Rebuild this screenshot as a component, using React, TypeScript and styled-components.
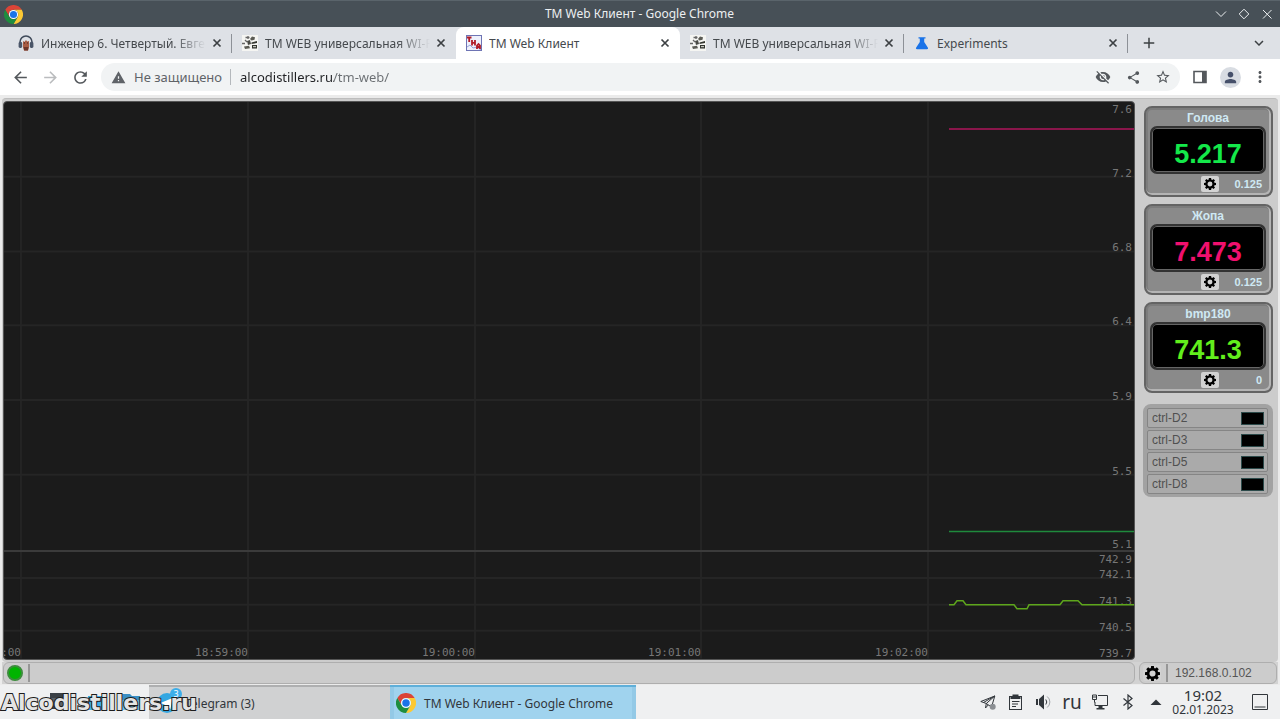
import React from 'react';
import styled, { createGlobalStyle } from 'styled-components';
import {
  MdAdd,
  MdArrowBack,
  MdArrowForward,
  MdExpandMore,
  MdMoreVert,
  MdPerson,
  MdRefresh,
  MdShare,
  MdStarBorder,
  MdVisibilityOff,
  MdWarning,
} from 'react-icons/md';

const GlobalStyle = createGlobalStyle`
  *, *::before, *::after { box-sizing: border-box; }
  html, body { margin: 0; padding: 0; }
  body {
    background: #eff0f1;
    font-family: "Noto Sans", "Open Sans", sans-serif;
    font-size: 13px;
    color: #31363b;
  }
  button, input { font: inherit; color: inherit; border: 0; padding: 0; margin: 0; background: none; }
  svg { display: block; flex: none; }
`;

const Desktop = styled.div`
  display: flex;
  flex-direction: column;
  min-height: 100vh;
`;

/* ---------- window title bar ---------- */

const TitleBar = styled.header`
  display: grid;
  grid-template-columns: 1fr auto 1fr;
  align-items: center;
  height: 27px;
  padding: 0 5px 0 4px;
  background: #475057;
  border-top: 1px solid #5a646b;
  color: #eceff1;
`;

const WindowTitle = styled.h1`
  margin: 0;
  font-size: 12px;
  font-weight: 400;
  line-height: 18px;
`;

const WindowButtons = styled.div`
  display: flex;
  justify-content: flex-end;
  gap: 6px;
`;

const WindowButton = styled.button`
  display: grid;
  place-items: center;
  width: 17px;
  height: 20px;
`;

/* ---------- tab strip ---------- */

const TabStrip = styled.nav`
  display: flex;
  align-items: center;
  height: 32px;
  padding: 0 7px 0 8px;
  background: #dee1e6;
`;

const Tab = styled.div<{ $active?: boolean; $line?: boolean }>`
  display: flex;
  align-items: center;
  flex: 0 1 224px;
  min-width: 0;
  height: 32px;
  padding: 0 7px 0 10px;
  border-radius: ${(p) => (p.$active ? '8px 8px 0 0' : '0')};
  background: ${(p) =>
    p.$active
      ? '#fff'
      : p.$line
        ? 'linear-gradient(#8d9197, #8d9197) right center / 1px 19px no-repeat'
        : 'transparent'};
`;

const TabButton = styled.button<{ $fade?: boolean }>`
  display: flex;
  align-items: center;
  gap: 7px;
  flex: 1;
  min-width: 0;
  text-align: left;
  color: #45494d;
  font-size: 12px;

  span {
    flex: 1;
    overflow: hidden;
    white-space: nowrap;
    mask-image: ${(p) => (p.$fade ? 'linear-gradient(to right, #000 80%, transparent)' : 'none')};
  }
`;

const CloseButton = styled.button`
  display: grid;
  place-items: center;
  width: 16px;
  height: 16px;
  margin-left: 3px;
  color: #3c4043;
`;

const StripButton = styled.button`
  display: grid;
  place-items: center;
  width: 28px;
  height: 28px;
  margin-left: 7px;
  color: #3c4043;
`;

const Spacer = styled.div`
  flex: 1;
`;

/* ---------- browser toolbar ---------- */

const Toolbar = styled.div`
  display: flex;
  align-items: center;
  height: 36px;
  padding: 0 5px;
  background: #fff;
`;

const ToolButton = styled.button<{ $dim?: boolean }>`
  display: grid;
  place-items: center;
  width: 30px;
  height: 28px;
  color: ${(p) => (p.$dim ? '#babcbe' : '#54585c')};
`;

const Omnibox = styled.div`
  display: flex;
  align-items: center;
  flex: 1;
  height: 28px;
  margin: 0 5px 0 6px;
  padding: 0 2px 0 10px;
  border-radius: 14px;
  background: #f1f3f4;
  color: #5f6368;
`;

const Security = styled.button`
  display: flex;
  align-items: center;
  gap: 8px;
  height: 16px;
  padding-right: 8px;
  border-right: 1px solid #b4b8bc;
  color: #5f6368;
  line-height: 16px;
`;

const Address = styled.input`
  flex: 1;
  min-width: 0;
  height: 20px;
  margin-left: 9px;
  outline: 0;
  color: transparent;
  background: linear-gradient(to right, #202124 94px, #6a6e72 94px);
  background-clip: text;
`;

const Avatar = styled.span`
  display: grid;
  place-items: center;
  width: 21px;
  height: 21px;
  border-radius: 50%;
  background: #d8dce2;
  color: #46506a;
`;

/* ---------- page ---------- */

const Page = styled.main`
  display: flex;
  flex-direction: column;
  flex: 1;
  padding: 3px 2px 1px;
  background: #ebebeb;
  font-family: "Liberation Sans", Arial, sans-serif;
`;

const Board = styled.div`
  display: flex;
  flex: 1;
  padding: 2px 5px 2px 1px;
  border-top: 1px solid #bdbdbd;
  border-radius: 4px;
  background: #ccc;
`;

const Charts = styled.section`
  display: flex;
  flex-direction: column;
  flex: 1;
  min-width: 0;
  border: 1px solid #555;
  border-radius: 4px;
  overflow: hidden;
  background: #1b1b1b;
`;

const ChartBox = styled.div<{ $share: number; $ruled?: boolean }>`
  flex: ${(p) => p.$share} 1 0;
  min-height: 0;
  border-top: ${(p) => (p.$ruled ? '2px solid #3b3b3b' : '0')};
`;

const ChartSvg = styled.svg`
  width: 100%;
  height: 100%;

  text {
    font-family: "DejaVu Sans Mono", monospace;
    font-size: 11px;
    fill: #777;
    text-anchor: end;
  }
`;

const Sidebar = styled.aside`
  display: flex;
  flex-direction: column;
  gap: 7px;
  width: 138px;
  padding: 5px 0 0 8px;
`;

const Meter = styled.section`
  display: flex;
  flex-direction: column;
  height: 91px;
  margin-left: 1px;
  padding: 2px 5px 1px 4px;
  border: 2px solid #646464;
  border-radius: 8px;
  background: #8a8a8a;
  box-shadow: inset -1px -1px 0 1px #b4b4b4, inset 0 0 0 2px #7c7c7c;
`;

const MeterName = styled.h2`
  margin: 0;
  font-size: 12px;
  font-weight: 700;
  line-height: 16px;
  text-align: center;
  color: #cfe8f3;
`;

const Display = styled.output<{ $color: string }>`
  display: grid;
  place-items: center;
  flex: none;
  height: 48px;
  padding-top: 8px;
  border: 2px solid #333;
  border-radius: 7px;
  background: #000;
  box-shadow: inset 0 0 0 1px #666;
  color: ${(p) => p.$color};
  font-size: 27px;
  font-weight: 700;
  line-height: 30px;
`;

const MeterFooter = styled.div`
  display: grid;
  grid-template-columns: 1fr 18px 1fr;
  align-items: center;
  height: 19px;
  padding: 0 4px 0 8px;
  color: #cfe8f3;
  font-size: 11px;
  font-weight: 700;
  text-align: right;

  button { grid-column: 2; }
`;

const GearButton = styled.button`
  display: grid;
  place-items: center;
  width: 18px;
  height: 16px;
  border-radius: 2px;
  background: #d2d2d2;
`;

const Controls = styled.ul`
  display: flex;
  flex-direction: column;
  gap: 2px;
  margin: 4px 0 0;
  padding: 4px 5px 3px 4px;
  list-style: none;
  border-radius: 8px;
  background: #a2a2a2;
`;

const Control = styled.li`
  display: flex;
  align-items: center;
  justify-content: space-between;
  height: 20px;
  padding: 0 3px 0 4px;
  border: 1px solid #858585;
  border-radius: 2px;
  background: #aaa;
  color: #505050;
  font-size: 12px;
`;

const Lamp = styled.button`
  width: 23px;
  height: 13px;
  border: 1px solid #2c4a4a;
  background: #000;
`;

const StatusRow = styled.footer`
  display: flex;
  gap: 4px;
  height: 22px;
  padding: 0 1px;
  background: #d2d2d2;
`;

const StatusPanel = styled.div<{ $width?: number }>`
  display: flex;
  align-items: center;
  flex: ${(p) => (p.$width ? `0 0 ${p.$width}px` : '1')};
  padding: 0 3px;
  border: 1px solid #aeaeae;
  border-radius: 6px;
  background: #ccc;
  color: #555;
  font-size: 12px;
`;

const StatusLight = styled.button`
  width: 16px;
  height: 16px;
  border: 2px solid #3c8c3c;
  border-radius: 50%;
  background: #00b400;
`;

const StatusLine = styled.span`
  width: 2px;
  height: 18px;
  margin: 0 5px;
  background: #969696;
`;

const StatusText = styled.span`
  margin-left: 2px;
`;

/* ---------- taskbar ---------- */

const Taskbar = styled.footer`
  position: relative;
  display: flex;
  height: 34px;
  background: #eff0f1;
`;

const Launchers = styled.div`
  display: flex;
  align-items: center;
  gap: 18px;
  width: 149px;
  padding-left: 50px;
`;

const Task = styled.button<{ $active?: boolean }>`
  display: flex;
  align-items: center;
  gap: 8px;
  flex: 0 1 ${(p) => (p.$active ? 246 : 241)}px;
  height: 34px;
  padding: 0 6px;
  border-top: 2px solid ${(p) => (p.$active ? '#5fafd9' : '#aeafb0')};
  background: ${(p) => (p.$active ? '#a0d3ee' : '#d0d1d2')};
  box-shadow: ${(p) => (p.$active ? 'inset -4px 0 0 #93c9e6, inset 4px 0 0 #93c9e6' : 'none')};
  font-size: 12px;
  white-space: nowrap;
`;

const Badged = styled.span`
  position: relative;
  margin-left: 2px;
`;

const Badge = styled.span`
  position: absolute;
  top: -5px;
  right: -5px;
  width: 12px;
  height: 12px;
  border-radius: 50%;
  background: #3daee9;
  color: #fff;
  font-size: 9px;
  line-height: 12px;
  text-align: center;
`;

const Tray = styled.div`
  display: flex;
  align-items: center;
  margin-left: auto;
  padding-right: 12px;
`;

const TrayButton = styled.button`
  display: grid;
  place-items: center;
  width: 28px;
  height: 30px;
  font-size: 19px;
`;

const Clock = styled.time`
  display: flex;
  flex-direction: column;
  width: 66px;
  margin-right: 16px;
  text-align: center;
  font-size: 12px;
  line-height: 13px;

  strong {
    font-size: 15px;
    font-weight: 400;
    line-height: 15px;
  }
`;

const Watermark = styled.span`
  position: absolute;
  left: 1px;
  top: 4px;
  font-family: "DejaVu Sans", sans-serif;
  font-size: 22px;
  font-weight: 700;
  line-height: 28px;
  color: #e4e4e4;
  paint-order: stroke fill;
  -webkit-text-stroke: 2px #1c1c1c;
  pointer-events: none;
`;

/* ---------- drawings ---------- */

const ChromeLogo = ({ size }: { size: number }) => (
  <svg width={size} height={size} viewBox="0 0 24 24" aria-hidden>
    <path fill="#db4437" d="M1.6 6A12 12 0 0 1 22.4 6H12A6 6 0 0 0 6.8 15Z" />
    <path fill="#fcc934" d="M22.4 6A12 12 0 0 1 12 24L17.2 15A6 6 0 0 0 12 6Z" />
    <path fill="#1e8e3e" d="M12 24A12 12 0 0 1 1.6 6L6.8 15A6 6 0 0 0 17.2 15Z" />
    <circle cx="12" cy="12" r="5.8" fill="#fff" />
    <circle cx="12" cy="12" r="4.5" fill="#1a73e8" />
  </svg>
);

const Gear = ({ size }: { size: number }) => (
  <svg width={size} height={size} viewBox="0 0 24 24" aria-hidden>
    <circle cx="12" cy="12" r="7" fill="none" stroke="#000" strokeWidth="4.2" />
    {[0, 45, 90, 135, 180, 225, 270, 315].map((a) => (
      <path key={a} d="M9.2 4.6L9.800 0h4.400l.6 4.600z" transform={`rotate(${a} 12 12)`} />
    ))}
  </svg>
);

const HeadphonesFavicon = () => (
  <svg width="16" height="16" viewBox="0 0 16 16" aria-hidden>
    <path d="M2 10V7a6 6 0 0 1 12 0v3" fill="none" stroke="#3f4a5a" strokeWidth="1.6" />
    <rect x="0.6" y="7" width="3.6" height="6" rx="1.4" fill="#4a5568" />
    <rect x="11.8" y="7" width="3.6" height="6" rx="1.4" fill="#4a5568" />
    <path d="M5 6l1.4 1L8 5l1.200 1.500 1.800-.5v6l-1 3.500H6L5 12z" fill="#a85b43" />
    <path d="M5.500 12h5L10 15.500H6.200z" fill="#6c3529" />
    <path d="M6 8h1M9 8h1" stroke="#3a2521" />
  </svg>
);

const ForumFavicon = () => (
  <svg width="16" height="16" viewBox="0 0 16 16" aria-hidden>
    <rect width="16" height="16" fill="#f5f5f2" />
    <path d="M3.500 2.500h4M6 1v3M0 8.500h3M3 5l2 2" stroke="#666" strokeWidth="1.300" />
    <path d="M8 4l2-2.500 3 .8-.5 2.500-3 .7zM2 11.500l5-.8 1 2.600-5 .7z" fill="#5b5b54" />
    <path d="M5 6l3-1 1 4-3 1z" fill="#4a4b46" />
    <path d="M9.500 7.500L15 6v2l-5.500 1zM10 10h5v3.500h-5z" fill="#33352f" />
    <path d="M11 11.700h3" stroke="#e5e5df" />
  </svg>
);

const ClientFavicon = () => (
  <svg width="16" height="16" viewBox="0 0 16 16" aria-hidden>
    <rect x=".5" y=".5" width="15" height="15" fill="#eef0fb" stroke="#6e74b4" />
    <path d="M1 12l3-2 3 3 4-1 4 3" fill="none" stroke="#98a4d8" />
    <path
      d="M1 2.500h4.500M3.200 2.500V7M6 5v5.500M9 5v5.500M6 7.800h3M11 14v-3.500l1.500-1.500 1.500 1.500V14M11 12h3"
      fill="none"
      stroke="#b01c28"
      strokeWidth="1.800"
    />
  </svg>
);

const FlaskFavicon = () => (
  <svg width="16" height="16" viewBox="0 0 16 16" aria-hidden>
    <path d="M4.500 2.200h7v1.300h-1.300V7l3.600 5.500c.6 1 .1 1.700-.8 1.700H3c-.9 0-1.400-.7-.8-1.700L5.800 7V3.500H4.500z" fill="#1a73e8" />
  </svg>
);

const line = { fill: 'none', stroke: 'currentColor' };

const CrossIcon = () => (
  <svg width="10" height="10" viewBox="0 0 10 10" aria-hidden>
    <path d="M1.500 1.500l7 7M8.500 1.500l-7 7" {...line} strokeWidth="1.700" />
  </svg>
);

const PlaneIcon = () => (
  <svg width="16" height="16" viewBox="0 0 16 16" aria-hidden>
    <path d="M.8 7.500L14.800 2 11.500 13 6.300 9.500zM6.300 9.500L14.800 2M6.300 9.500L5.500 14l2.700-3M3.500 8.500L14.800 2" {...line} />
    <circle cx="12.700" cy="12.700" r="3" fill="#8b8f93" />
  </svg>
);

const ClipboardIcon = () => (
  <svg width="16" height="16" viewBox="0 0 16 16" aria-hidden>
    <rect x="1.500" y="2.500" width="12" height="13" {...line} />
    <path d="M4.500.5h6v1.500h2v3h-10V2h2z" fill="currentColor" />
    <path d="M4 7.500h7.500M4 10h6M4 12.500h4" {...line} />
  </svg>
);

const VolumeIcon = () => (
  <svg width="16" height="16" viewBox="0 0 16 16" aria-hidden>
    <path d="M0 5h2v6H0zM3 5l5-4.500v15L3 11z" fill="currentColor" />
    <path d="M9.800 5.500a4 4 0 0 1 0 5" {...line} />
    <path d="M11.200 2.500a7 7 0 0 1 0 11" fill="none" stroke="#a0a4a8" />
  </svg>
);

const NetworkIcon = () => (
  <svg width="16" height="16" viewBox="0 0 16 16" aria-hidden>
    <path d="M6 1.500h9.500v10H3V8" {...line} />
    <path d="M6.500 12h4v2h2v1.500h-8V14h2z" fill="currentColor" />
    <path d="M.5 1h4v4.500h-4zM2.500 5.500v3M.5 3h4" {...line} />
  </svg>
);

const BluetoothIcon = () => (
  <svg width="16" height="16" viewBox="0 0 16 16" aria-hidden>
    <path d="M3.500 4.500l8.500 7L8 15V1l4 3.500-8.500 7" {...line} strokeWidth="1.200" />
  </svg>
);

const TelegramLogo = () => (
  <svg width="20" height="20" viewBox="0 0 20 20" aria-hidden>
    <circle cx="10" cy="10" r="10" fill="#35a7e1" />
    <path d="M3.500 10l12-5-2 11-4-3-2 2v-3.500z" fill="#fff" />
  </svg>
);

/* ---------- charts ---------- */

type Mark = { at: number; text?: string };

type ChartProps = {
  label: string;
  height: number;
  ruled?: boolean;
  levels: Mark[];
  edges: { top: string; bottom: string };
  traces: { color: string; points: string }[];
  showTimes?: boolean;
};

const SPAN = 1130;

const TIMES: Mark[] = [
  { at: 17, text: '18:58:00' },
  { at: 244, text: '18:59:00' },
  { at: 471, text: '19:00:00' },
  { at: 697, text: '19:01:00' },
  { at: 924, text: '19:02:00' },
];

const pct = (value: number, whole: number) => `${(value / whole) * 100}%`;

function Chart({ label, height, ruled, levels, edges, traces, showTimes }: ChartProps) {
  return (
    <ChartBox $share={height} $ruled={ruled}>
      <ChartSvg role="img" aria-label={label}>
        {TIMES.map((t) => (
          <line key={t.at} x1={pct(t.at, SPAN)} x2={pct(t.at, SPAN)} y1="0" y2="100%" stroke="#242424" strokeWidth="2" />
        ))}
        {levels.map((l) => (
          <line key={l.at} x1="0" x2="100%" y1={pct(l.at, height)} y2={pct(l.at, height)} stroke="#252525" strokeWidth="2" />
        ))}
        <text x="100%" y="11" dx="-2">{edges.top}</text>
        {levels.map((l) => (
          <text key={l.at} x="100%" y={pct(l.at, height)} dx="-2">{l.text}</text>
        ))}
        <text x="100%" y="100%" dx="-2" dy="-2">{edges.bottom}</text>
        {showTimes &&
          TIMES.map((t) => (
            <text key={t.at} x={pct(t.at, SPAN)} y="100%" dy="-3">{t.text}</text>
          ))}
        <svg width="100%" height="100%" viewBox={`0 0 ${SPAN} ${height}`} preserveAspectRatio="none">
          {traces.map((t) => (
            <polyline
              key={t.color}
              points={t.points}
              fill="none"
              stroke={t.color}
              strokeWidth="1.500"
              vectorEffect="non-scaling-stroke"
            />
          ))}
        </svg>
      </ChartSvg>
    </ChartBox>
  );
}

/* ---------- data ---------- */

const TABS = [
  { title: 'Инженер 6. Четвертый. Евгений', icon: <HeadphonesFavicon />, fade: true, line: true },
  { title: 'TM WEB универсальная WI-FI', icon: <ForumFavicon />, fade: true },
  { title: 'TM Web Клиент', icon: <ClientFavicon />, active: true },
  { title: 'TM WEB универсальная WI-FI', icon: <ForumFavicon />, fade: true, line: true },
  { title: 'Experiments', icon: <FlaskFavicon />, line: true },
];

const METERS = [
  { name: 'Голова', value: '5.217', step: '0.125', color: '#14e84a' },
  { name: 'Жопа', value: '7.473', step: '0.125', color: '#f0106e' },
  { name: 'bmp180', value: '741.3', step: '0', color: '#62ee1c' },
];

const CONTROLS = ['ctrl-D2', 'ctrl-D3', 'ctrl-D5', 'ctrl-D8'];

export default function App() {
  return (
    <Desktop>
      <GlobalStyle />
      <TitleBar>
        <ChromeLogo size={19} />
        <WindowTitle>TM Web Клиент - Google Chrome</WindowTitle>
        <WindowButtons>
          <WindowButton aria-label="Свернуть">
            <svg width="12" height="12" viewBox="0 0 12 12"><path d="M1 3.500l5 5 5-5" {...line} /></svg>
          </WindowButton>
          <WindowButton aria-label="Развернуть">
            <svg width="12" height="12" viewBox="0 0 12 12"><path d="M6 1.200L10.800 6 6 10.800 1.200 6z" {...line} /></svg>
          </WindowButton>
          <WindowButton aria-label="Закрыть">
            <svg width="12" height="12" viewBox="0 0 12 12"><path d="M2 2l8.500 8.500M10.500 2L2 10.500" {...line} /></svg>
          </WindowButton>
        </WindowButtons>
      </TitleBar>

      <TabStrip aria-label="Вкладки">
        {TABS.map((t, i) => (
          <Tab key={i} $active={t.active} $line={t.line}>
            <TabButton $fade={t.fade}>
              {t.icon}
              <span>{t.title}</span>
            </TabButton>
            <CloseButton aria-label="Закрыть вкладку"><CrossIcon /></CloseButton>
          </Tab>
        ))}
        <StripButton aria-label="Новая вкладка"><MdAdd size={18} /></StripButton>
        <Spacer />
        <StripButton aria-label="Поиск вкладок"><MdExpandMore size={18} /></StripButton>
      </TabStrip>

      <Toolbar>
        <ToolButton aria-label="Назад"><MdArrowBack size={19} /></ToolButton>
        <ToolButton aria-label="Вперёд" $dim><MdArrowForward size={19} /></ToolButton>
        <ToolButton aria-label="Обновить"><MdRefresh size={19} /></ToolButton>
        <Omnibox>
          <Security><MdWarning size={15} />Не защищено</Security>
          <Address aria-label="Адресная строка" defaultValue="alcodistillers.ru/tm-web/" />
          <ToolButton aria-label="Куки заблокированы"><MdVisibilityOff size={16} /></ToolButton>
          <ToolButton aria-label="Поделиться"><MdShare size={15} /></ToolButton>
          <ToolButton aria-label="В закладки"><MdStarBorder size={16} /></ToolButton>
        </Omnibox>
        <ToolButton aria-label="Боковая панель">
          <svg width="14" height="14" viewBox="0 0 14 14"><path d="M1 1.500h12v11H1z" {...line} strokeWidth="1.600" /><path d="M9 1h4v12H9z" fill="currentColor" /></svg>
        </ToolButton>
        <ToolButton aria-label="Профиль"><Avatar><MdPerson size={17} /></Avatar></ToolButton>
        <ToolButton aria-label="Меню"><MdMoreVert size={18} /></ToolButton>
      </Toolbar>

      <Page>
        <Board>
          <Charts>
            <Chart
              label="Температура"
              height={450}
              levels={[
                { at: 75, text: '7.2' },
                { at: 150, text: '6.8' },
                { at: 224, text: '6.4' },
                { at: 299, text: '5.9' },
                { at: 374, text: '5.5' },
              ]}
              edges={{ top: '7.6', bottom: '5.1' }}
              traces={[
                { color: '#b0165c', points: '945,27 1130,27' },
                { color: '#1f8a3c', points: '945,431 1130,431' },
              ]}
            />
            <Chart
              label="Давление"
              height={107}
              ruled
              showTimes
              levels={[
                { at: 26, text: '742.1' },
                { at: 53, text: '741.3' },
                { at: 79, text: '740.5' },
              ]}
              edges={{ top: '742.9', bottom: '739.7' }}
              traces={[
                {
                  color: '#5ea61c',
                  points:
                    '945,53 950,53 953,49 959,49 962,53 1010,53 1013,57 1023,57 1025,53 1056,53 1059,49 1074,49 1078,53 1130,53',
                },
              ]}
            />
          </Charts>
          <Sidebar>
            {METERS.map((m) => (
              <Meter key={m.name}>
                <MeterName>{m.name}</MeterName>
                <Display $color={m.color}>{m.value}</Display>
                <MeterFooter>
                  <GearButton aria-label={`Настройки ${m.name}`}><Gear size={12} /></GearButton>
                  <span>{m.step}</span>
                </MeterFooter>
              </Meter>
            ))}
            <Controls>
              {CONTROLS.map((c) => (
                <Control key={c}>
                  {c}
                  <Lamp aria-label={c} />
                </Control>
              ))}
            </Controls>
          </Sidebar>
        </Board>
        <StatusRow>
          <StatusPanel>
            <StatusLight aria-label="Соединение" />
            <StatusLine />
          </StatusPanel>
          <StatusPanel $width={138}>
            <GearButton aria-label="Настройки"><Gear size={15} /></GearButton>
            <StatusLine />
            <StatusText>192.168.0.102</StatusText>
          </StatusPanel>
        </StatusRow>
      </Page>

      <Taskbar>
        <Launchers>
          <svg width="18" height="18" viewBox="0 0 18 18" aria-hidden><path d="M0 0h18v16H0z" fill="#3a4046" /><path d="M0 5h18v8H0z" fill="#5c6268" /></svg>
          <svg width="18" height="18" viewBox="0 0 18 18" aria-hidden><path d="M2 3h14v14H2z" fill="#3daee9" /><path d="M5 7h8l-4 6z" fill="#1d6fa5" /></svg>
          <svg width="18" height="18" viewBox="0 0 18 18" aria-hidden><path d="M0 1h8l2 2h8v13H0z" fill="#3a8fc4" /><path d="M0 7h18v10H0z" fill="#6cc0ee" /></svg>
        </Launchers>
        <Task>
          <Badged>
            <TelegramLogo />
            <Badge>3</Badge>
          </Badged>
          Telegram (3)
        </Task>
        <Task $active>
          <ChromeLogo size={20} />
          TM Web Клиент - Google Chrome
        </Task>
        <Tray>
          <TrayButton aria-label="Telegram"><PlaneIcon /></TrayButton>
          <TrayButton aria-label="Буфер обмена"><ClipboardIcon /></TrayButton>
          <TrayButton aria-label="Громкость"><VolumeIcon /></TrayButton>
          <TrayButton>ru</TrayButton>
          <TrayButton aria-label="Сеть"><NetworkIcon /></TrayButton>
          <TrayButton aria-label="Bluetooth"><BluetoothIcon /></TrayButton>
          <TrayButton aria-label="Показать скрытые значки">
            <svg width="12" height="12" viewBox="0 0 12 12"><path d="M.5 9L6 3.500 11.500 9z" fill="currentColor" /></svg>
          </TrayButton>
          <Clock dateTime="2023-01-02T19:02">
            <strong>19:02</strong>
            02.01.2023
          </Clock>
          <button aria-label="Показать рабочий стол">
            <svg width="16" height="16" viewBox="0 0 16 16"><path d="M.5.5h15v15H.5zM2.500 13h11" {...line} /></svg>
          </button>
        </Tray>
        <Watermark>Alcodistillers.ru</Watermark>
      </Taskbar>
    </Desktop>
  );
}
